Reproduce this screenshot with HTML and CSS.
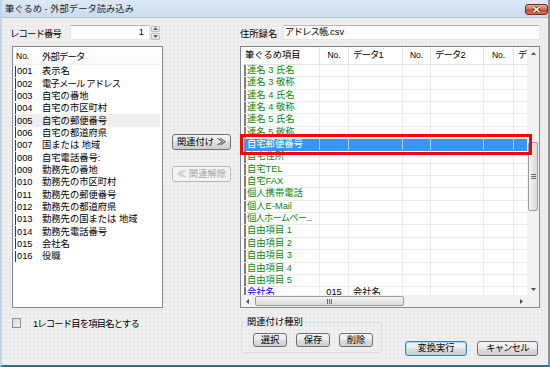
FILE: index.html
```html
<!DOCTYPE html>
<html lang="ja">
<head>
<meta charset="utf-8">
<title>筆ぐるめ - 外部データ読み込み</title>
<link rel="stylesheet" href="styles.css">
</head>
<body>
<div class="window">
  <div class="titlebar">
    <span class="title">筆ぐるめ - 外部データ読み込み</span>
    <div class="close-btn">
      <svg width="11" height="7" viewBox="0 0 11 7"><path d="M2.5 0.8 L8.5 6.2 M8.5 0.8 L2.5 6.2" stroke="#5a1b12" stroke-width="3"/><path d="M2.5 0.8 L8.5 6.2 M8.5 0.8 L2.5 6.2" stroke="#ffffff" stroke-width="1.6"/></svg>
    </div>
  </div>
  <div class="client">
    <div class="rec-row">
      <span class="rec-label narrow">レコード番号</span>
      <div class="num-input">1</div>
      <div class="spin">
        <div class="spin-btn"><svg width="5" height="3" viewBox="0 0 5 3"><path d="M0 3 L2.5 0 L5 3Z" fill="#4d6185"/></svg></div>
        <div class="spin-btn"><svg width="5" height="3" viewBox="0 0 5 3"><path d="M0 0 L2.5 3 L5 0Z" fill="#4d6185"/></svg></div>
      </div>
    </div>
    <div class="spacer"></div>
    <div class="file-row">
      <span class="file-label">住所録名</span>
      <div class="text-input"><span class="narrow">アドレス帳</span>.csv</div>
    </div>

    <div class="src-list">
      <div class="src-head"><span class="c-no">No.</span><span class="narrow">外部データ</span></div>
      <div class="src-row"><span class="c-no">001</span><span>表示名</span></div>
      <div class="src-row"><span class="c-no">002</span><span class="narrow">電子メール アドレス</span></div>
      <div class="src-row"><span class="c-no">003</span><span>自宅の番地</span></div>
      <div class="src-row"><span class="c-no">004</span><span>自宅の市区町村</span></div>
      <div class="src-row hover"><span class="c-no">005</span><span>自宅の郵便番号</span></div>
      <div class="src-row"><span class="c-no">006</span><span>自宅の都道府県</span></div>
      <div class="src-row"><span class="c-no">007</span><span>国または 地域</span></div>
      <div class="src-row"><span class="c-no">008</span><span>自宅電話番号:</span></div>
      <div class="src-row"><span class="c-no">009</span><span>勤務先の番地</span></div>
      <div class="src-row"><span class="c-no">010</span><span>勤務先の市区町村</span></div>
      <div class="src-row"><span class="c-no">011</span><span>勤務先の郵便番号</span></div>
      <div class="src-row"><span class="c-no">012</span><span>勤務先の都道府県</span></div>
      <div class="src-row"><span class="c-no">013</span><span>勤務先の国または 地域</span></div>
      <div class="src-row"><span class="c-no">014</span><span>勤務先電話番号</span></div>
      <div class="src-row"><span class="c-no">015</span><span>会社名</span></div>
      <div class="src-row"><span class="c-no">016</span><span>役職</span></div>
    </div>

    <div class="mid-buttons">
      <button class="btn link-btn">関連付け ≫</button>
      <button class="btn link-btn" disabled>≪ 関連解除</button>
    </div>

    <div class="grid-box">
      <div class="viewport">
        <div class="grow ghead">
          <div class="gc">筆ぐるめ項目</div>
          <div class="gc ctr">No.</div>
          <div class="gc pad narrow">データ1</div>
          <div class="gc ctr">No.</div>
          <div class="gc pad narrow">データ2</div>
          <div class="gc ctr">No.</div>
          <div class="gc pad">デ</div>
        </div>
        <div class="grow"><div class="gc item">連名 3 氏名</div><div class="gc"></div><div class="gc"></div><div class="gc"></div><div class="gc"></div><div class="gc"></div><div class="gc"></div></div>
        <div class="grow"><div class="gc item">連名 3 敬称</div><div class="gc"></div><div class="gc"></div><div class="gc"></div><div class="gc"></div><div class="gc"></div><div class="gc"></div></div>
        <div class="grow"><div class="gc item">連名 4 氏名</div><div class="gc"></div><div class="gc"></div><div class="gc"></div><div class="gc"></div><div class="gc"></div><div class="gc"></div></div>
        <div class="grow"><div class="gc item">連名 4 敬称</div><div class="gc"></div><div class="gc"></div><div class="gc"></div><div class="gc"></div><div class="gc"></div><div class="gc"></div></div>
        <div class="grow"><div class="gc item">連名 5 氏名</div><div class="gc"></div><div class="gc"></div><div class="gc"></div><div class="gc"></div><div class="gc"></div><div class="gc"></div></div>
        <div class="grow"><div class="gc item">連名 5 敬称</div><div class="gc"></div><div class="gc"></div><div class="gc"></div><div class="gc"></div><div class="gc"></div><div class="gc"></div></div>
        <div class="grow selected"><div class="gc item">自宅郵便番号</div><div class="gc"></div><div class="gc"></div><div class="gc"></div><div class="gc"></div><div class="gc"></div><div class="gc"></div></div>
        <div class="grow"><div class="gc item">自宅住所</div><div class="gc"></div><div class="gc"></div><div class="gc"></div><div class="gc"></div><div class="gc"></div><div class="gc"></div></div>
        <div class="grow"><div class="gc item">自宅TEL</div><div class="gc"></div><div class="gc"></div><div class="gc"></div><div class="gc"></div><div class="gc"></div><div class="gc"></div></div>
        <div class="grow"><div class="gc item">自宅FAX</div><div class="gc"></div><div class="gc"></div><div class="gc"></div><div class="gc"></div><div class="gc"></div><div class="gc"></div></div>
        <div class="grow"><div class="gc item">個人携帯電話</div><div class="gc"></div><div class="gc"></div><div class="gc"></div><div class="gc"></div><div class="gc"></div><div class="gc"></div></div>
        <div class="grow"><div class="gc item">個人E-Mail</div><div class="gc"></div><div class="gc"></div><div class="gc"></div><div class="gc"></div><div class="gc"></div><div class="gc"></div></div>
        <div class="grow"><div class="gc item narrow">個人ホームペー...</div><div class="gc"></div><div class="gc"></div><div class="gc"></div><div class="gc"></div><div class="gc"></div><div class="gc"></div></div>
        <div class="grow"><div class="gc item">自由項目 1</div><div class="gc"></div><div class="gc"></div><div class="gc"></div><div class="gc"></div><div class="gc"></div><div class="gc"></div></div>
        <div class="grow"><div class="gc item">自由項目 2</div><div class="gc"></div><div class="gc"></div><div class="gc"></div><div class="gc"></div><div class="gc"></div><div class="gc"></div></div>
        <div class="grow"><div class="gc item">自由項目 3</div><div class="gc"></div><div class="gc"></div><div class="gc"></div><div class="gc"></div><div class="gc"></div><div class="gc"></div></div>
        <div class="grow"><div class="gc item">自由項目 4</div><div class="gc"></div><div class="gc"></div><div class="gc"></div><div class="gc"></div><div class="gc"></div><div class="gc"></div></div>
        <div class="grow"><div class="gc item">自由項目 5</div><div class="gc"></div><div class="gc"></div><div class="gc"></div><div class="gc"></div><div class="gc"></div><div class="gc"></div></div>
        <div class="grow"><div class="gc item linked">会社名</div><div class="gc ctr">015</div><div class="gc pad">会社名</div><div class="gc"></div><div class="gc"></div><div class="gc"></div><div class="gc"></div></div>
      </div>
      <div class="vscroll">
        <div class="sb-arrow"><svg width="5" height="3" viewBox="0 0 5 3"><path d="M0 3 L2.5 0 L5 3Z" fill="#505050"/></svg></div>
        <div class="vthumb"><svg width="5" height="5" viewBox="0 0 5 5"><path d="M0 0.5 H5 M0 2.5 H5 M0 4.5 H5" stroke="#6a6a6a" stroke-width="1"/></svg></div>
        <div class="sb-arrow end"><svg width="5" height="3" viewBox="0 0 5 3"><path d="M0 0 L2.5 3 L5 0Z" fill="#505050"/></svg></div>
      </div>
      <div class="hscroll">
        <div class="sb-arrow"><svg width="3" height="5" viewBox="0 0 3 5"><path d="M3 0 L0 2.5 L3 5Z" fill="#505050"/></svg></div>
        <div class="hthumb"><svg width="5" height="5" viewBox="0 0 5 5"><path d="M0.5 0 V5 M2.5 0 V5 M4.5 0 V5" stroke="#6a6a6a" stroke-width="1"/></svg></div>
        <div class="sb-arrow end"><svg width="3" height="5" viewBox="0 0 3 5"><path d="M0 0 L3 2.5 L0 5Z" fill="#505050"/></svg></div>
      </div>
      <div class="corner"></div>
    </div>

    <div class="chk-row"><span class="chk"></span><span class="narrow">1レコード目を項目名とする</span></div>
    <div class="spacer"></div>
    <div class="bottom-right">
      <fieldset class="grp">
        <legend>関連付け種別</legend>
        <div class="grp-buttons">
          <button class="btn small">選択</button>
          <button class="btn small">保存</button>
          <button class="btn small">削除</button>
        </div>
      </fieldset>
      <div class="actions">
        <button class="btn act default">変換実行</button>
        <button class="btn act cancel"><span class="narrow">キャンセル</span></button>
      </div>
    </div>
  </div>
  <div class="highlight-box"></div>
</div>
</body>
</html>
```

FILE: styles.css
```css
html, body {
  margin: 0;
  padding: 0;
}
body {
  width: 550px;
  height: 367px;
  overflow: hidden;
  font-family: "Liberation Sans", "Noto Sans CJK JP", sans-serif;
  font-size: 9.3px;
  color: #000;
}
.narrow { letter-spacing: -0.8px; }
.window {
  position: relative;
  width: 550px;
  height: 367px;
  box-sizing: border-box;
  background: #cfdeef;
  border-left: 2px solid #c3d5ea;
  border-right: 2px solid #7d93aa;
  border-bottom: 2px solid #3d6b7c;
  display: flex;
  flex-direction: column;
}
.titlebar {
  height: 17px;
  flex: none;
  display: flex;
  align-items: flex-start;
  background: linear-gradient(#dde8f5, #cbdcef);
}
.title {
  margin: 4px 0 0 3px;
  line-height: 11px;
  font-size: 9.3px;
  color: #1e1e1e;
  white-space: nowrap;
}
.close-btn {
  margin: 4px 0 0 auto;
  width: 23px;
  height: 11px;
  box-sizing: border-box;
  border: 1px solid #6f2b22;
  border-radius: 3px;
  background: linear-gradient(#e8ab9d, #d27560 45%, #c2462e 55%, #d9765a);
  display: flex;
  align-items: center;
  justify-content: center;
}
.close-btn svg { display: block; }

.client {
  flex: 1;
  border-top: 1px solid #b3c3d4;
  background-color: #ebebeb;
  background-image: radial-gradient(circle, #fbfbfb 0.5px, transparent 0.9px);
  background-size: 4px 4px;
  display: grid;
  grid-template-columns: 151px 59px 300px;
  grid-template-rows: 15px 262px 1fr;
  column-gap: 9px;
  row-gap: 6px;
  padding: 7px 8px 0 10px;
}

/* top row */
.rec-row {
  display: flex;
  align-items: center;
  margin-left: -2px;
}
.rec-label {
  width: 60px;
  white-space: nowrap;
}
.num-input {
  width: 80px;
  height: 15px;
  box-sizing: border-box;
  background: #fff;
  border: 1px solid #e2e5e9;
  border-top-color: #b4b7bd;
  text-align: right;
  padding-right: 5px;
  line-height: 13px;
}
.spin {
  margin-left: 1px;
  width: 9px;
  height: 14px;
  display: flex;
  flex-direction: column;
  gap: 1px;
}
.spin-btn {
  flex: 1;
  box-sizing: border-box;
  border: 1px solid #b5bfca;
  border-radius: 1px;
  background: linear-gradient(#f5f7f9, #dde3ea);
  display: flex;
  align-items: center;
  justify-content: center;
}
.spin-btn svg { display: block; }
.file-row {
  display: flex;
  align-items: center;
}
.file-label {
  width: 43px;
  white-space: nowrap;
}
.text-input {
  flex: 1;
  height: 15px;
  box-sizing: border-box;
  background: #fff;
  border: 1px solid #e2e5e9;
  border-top-color: #b4b7bd;
  padding-left: 1px;
  line-height: 13px;
}

/* left list */
.src-list {
  box-sizing: border-box;
  border: 1px solid #828790;
  background: #fff;
  overflow: hidden;
}
.src-head {
  height: 18px;
  box-sizing: border-box;
  display: flex;
  align-items: center;
  padding-left: 3px;
  margin-right: 2px;
  border-bottom: 1px solid #f0f0f0;
  background: linear-gradient(#ffffff, #fafafa);
}
.src-head .c-no { width: 26px; font-size: 8.5px; }
.src-row {
  height: 12.35px;
  line-height: 12px;
  display: flex;
  align-items: center;
  margin: 0 2px 0 2px;
  padding-left: 2px;
  white-space: nowrap;
  background-image: linear-gradient(#3a3a3a, #3a3a3a);
  background-size: 1px 11px;
  background-repeat: no-repeat;
  background-position: left center;
}
.src-row .c-no { width: 25px; }
.src-row.hover { background-color: #eeeeee; }

/* middle buttons */
.mid-buttons {
  display: flex;
  flex-direction: column;
  padding-top: 88px;
  gap: 16px;
}
.btn {
  font-family: inherit;
  font-size: 9.3px;
  color: #000;
  padding: 0;
  margin: 0;
  box-sizing: border-box;
  border: 1px solid #707070;
  border-radius: 3px;
  background: linear-gradient(#f3f3f3 0%, #ebebeb 48%, #dddddd 52%, #cfcfcf 100%);
  white-space: nowrap;
}
.link-btn {
  width: 59px;
  height: 16px;
  line-height: 14px;
}
.btn:disabled {
  color: #a3a3a3;
  border-color: #b4b8bb;
  background: #f4f4f4;
}

/* right grid */
.grid-box {
  box-sizing: border-box;
  border: 1px solid #828790;
  background: #fff;
  display: grid;
  grid-template-columns: 286px 12px;
  grid-template-rows: 248px 12px;
}
.viewport {
  overflow: hidden;
  padding-left: 3px;
}
.grow {
  display: grid;
  grid-template-columns: 76px 29px 54px 28px 53px 30px 60px;
  height: 12.35px;
  box-sizing: border-box;
  border-bottom: 1px solid #ebebeb;
  width: 330px;
}
.gc {
  box-sizing: border-box;
  border-right: 1px solid #ebebeb;
  line-height: 11px;
  padding-left: 1px;
  white-space: nowrap;
}
.gc.item {
  color: #0b870b;
  border-left: 2px solid #7e7e7e;
  padding-left: 1px;
}
.gc.item.linked { color: #0000ee; }
.gc.ctr { text-align: center; padding-left: 0; }
.gc.pad { padding-left: 4px; }
.ghead {
  height: 18px;
  border-bottom: 1px solid #e3e3e3;
}
.ghead .gc {
  line-height: 17px;
  border-right-color: #e3e3e3;
}
.ghead .gc.ctr { font-size: 8.5px; }
.grow.selected { background: #3399ff; border-bottom-color: #3399ff; }
.grow.selected .gc { color: #fff; border-right-color: #a9d0fb; }
.grow.selected .gc.item { border-left-color: #3399ff; }

.vscroll {
  background: #f2f2f2;
  display: flex;
  flex-direction: column;
  align-items: center;
}
.sb-arrow {
  width: 12px;
  height: 12px;
  flex: none;
  display: flex;
  align-items: center;
  justify-content: center;
}
.sb-arrow svg { display: block; }
.sb-arrow.end { margin-top: auto; }
.hscroll .sb-arrow.end { margin-top: 0; margin-left: auto; }
.vthumb {
  margin-top: 83px;
  width: 10px;
  height: 69px;
  box-sizing: border-box;
  border: 1px solid #9b9b9b;
  border-radius: 2px;
  background: linear-gradient(to right, #f6f6f6, #e6e6e6 50%, #d9d9d9);
  display: flex;
  align-items: center;
  justify-content: center;
}
.hscroll {
  background: #f2f2f2;
  display: flex;
  align-items: center;
}
.hthumb {
  margin-left: 2px;
  width: 149px;
  height: 10px;
  box-sizing: border-box;
  border: 1px solid #9b9b9b;
  border-radius: 2px;
  background: linear-gradient(#f6f6f6, #e6e6e6 50%, #d9d9d9);
  display: flex;
  align-items: center;
  justify-content: center;
}
.vthumb svg, .hthumb svg { display: block; }
.corner { background: #f0f0f0; }

/* bottom */
.chk-row {
  display: flex;
  align-items: center;
  gap: 12px;
  margin-top: 4px;
  height: 10px;
  white-space: nowrap;
}
.chk {
  width: 9px;
  height: 10px;
  box-sizing: border-box;
  border: 1px solid #8f8f8f;
  background: linear-gradient(135deg, #d6d6d6, #f4f4f4);
  flex: none;
}
.bottom-right {
  display: flex;
  align-items: flex-start;
}
.grp {
  margin: 2.5px 0 0 1px;
  width: 141px;
  box-sizing: border-box;
  padding: 0 0 5px 4px;
  border: 1px solid #d3dde4;
  border-radius: 3px;
}
.grp legend {
  padding: 0 1px;
  line-height: 11px;
}
.grp-buttons {
  display: flex;
  gap: 9px;
  margin-top: 5px;
  padding-left: 7px;
}
.btn.small {
  width: 34px;
  height: 14px;
  line-height: 12px;
}
.actions {
  margin: 27px 2px 0 auto;
  display: flex;
  gap: 10px;
}
.btn.act {
  height: 15px;
  line-height: 13px;
}
.btn.default {
  width: 62px;
  border-color: #3c7fb1;
  box-shadow: inset 0 0 0 1px #9fdcf7;
}
.btn.cancel { width: 61px; }

.highlight-box {
  position: absolute;
  left: 238px;
  top: 134px;
  width: 292px;
  height: 21px;
  box-sizing: border-box;
  border: 3px solid #ff0000;
}
```
